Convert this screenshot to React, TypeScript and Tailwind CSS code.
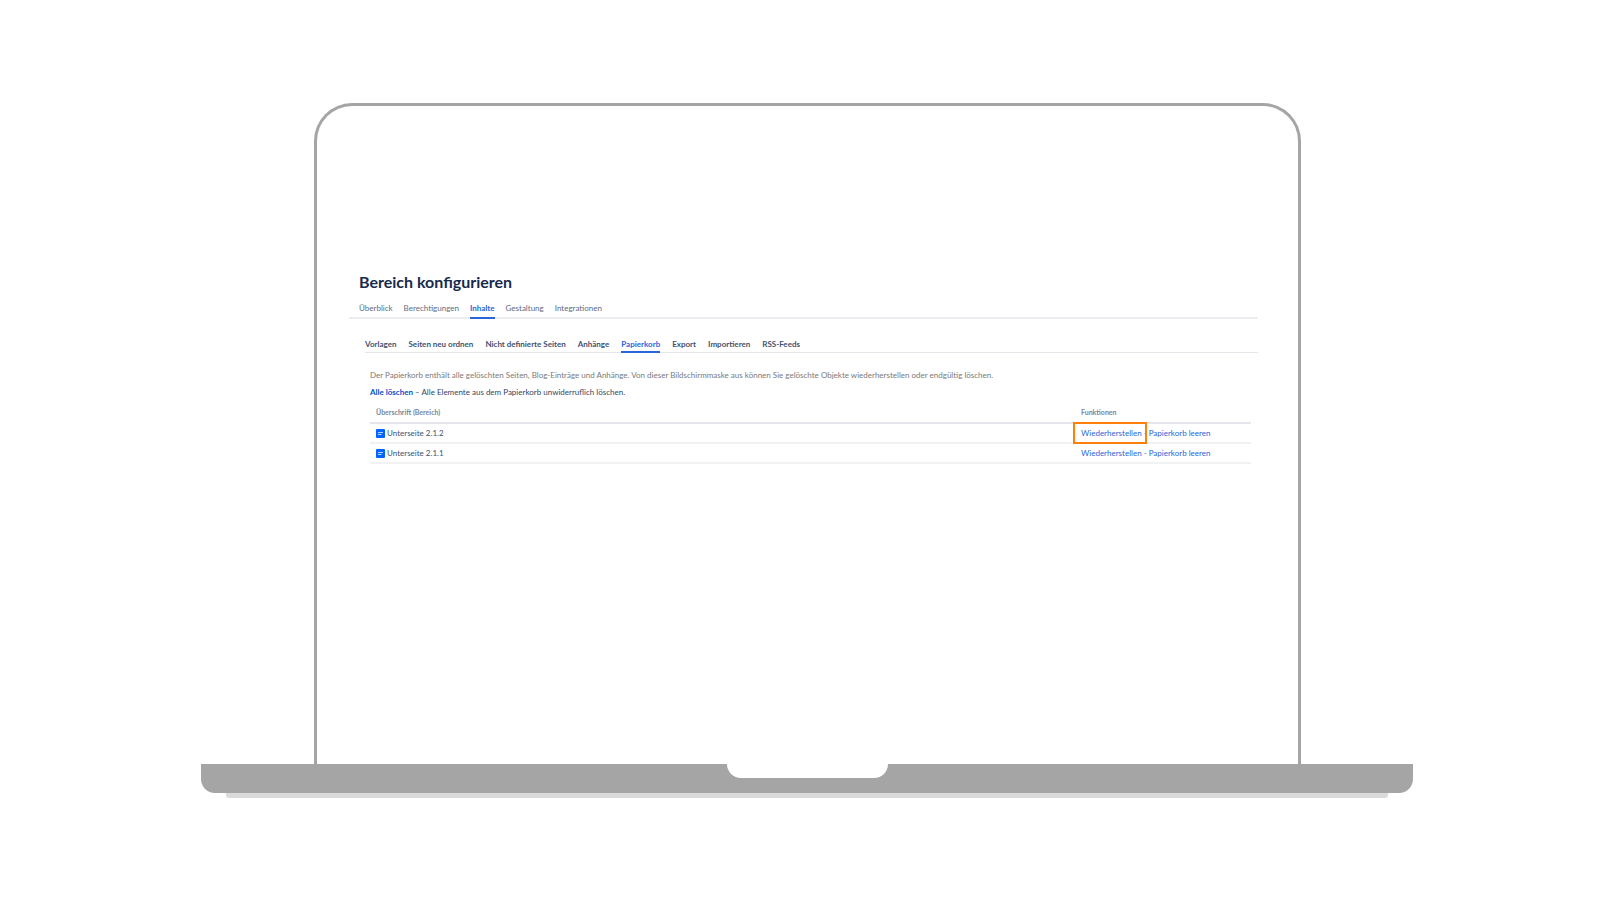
const mainTabs = ['Überblick', 'Berechtigungen', 'Inhalte', 'Gestaltung', 'Integrationen'];
const contentTabs = ['Vorlagen', 'Seiten neu ordnen', 'Nicht definierte Seiten', 'Anhänge', 'Papierkorb', 'Export', 'Importieren', 'RSS-Feeds'];
const deletedPages = ['Unterseite 2.1.2', 'Unterseite 2.1.1'];

function PageIcon() {
    return (
        <svg viewBox="0 0 9 9" className="size-[9px] shrink-0" aria-hidden="true">
            <rect width="9" height="9" rx="1" fill="#0065ff"/>
            <path d="M2 3.5h5M2 5.5h3.5" stroke="#b3d4ff" strokeWidth="1"/>
        </svg>
    );
}

function MainNav() {
    return (
        <nav className="flex gap-[11px] border-b-2 border-[#ebecf0] pl-[10px] text-[8px] leading-[14px] text-[#5e6c84]">
            {mainTabs.map((tab) => (
                <a
                    key={tab}
                    href="#"
                    className={tab === 'Inhalte' ? '-mb-[2px] border-b-2 border-[#2b65d9] pb-[2px] font-bold text-[#2b65d9]' : 'pb-[2px]'}
                >
                    {tab}
                </a>
            ))}
        </nav>
    );
}

function ContentNav() {
    return (
        <nav className="ml-4 mt-[18px] flex gap-3 border-b border-[#e4e6ec] text-[8px] font-bold leading-[14px] text-[#42526e]">
            {contentTabs.map((tab) => (
                <a
                    key={tab}
                    href="#"
                    className={tab === 'Papierkorb' ? '-mb-px border-b-2 border-[#2b65d9] text-[#2b65d9]' : ''}
                >
                    {tab}
                </a>
            ))}
        </nav>
    );
}

function TrashTable() {
    return (
        <table className="mt-[5px] w-full text-left text-[8px] leading-[14px] text-[#42526e]">
            <thead>
                <tr className="border-b-2 border-[#e4e6ec] text-[7px] text-[#7a869a]">
                    <th className="h-[19px] pl-[6px] pb-[2px] font-bold">Überschrift (Bereich)</th>
                    <th className="w-[170px] pb-[2px] font-bold">Funktionen</th>
                </tr>
            </thead>
            <tbody>
                {deletedPages.map((page, index) => (
                    <tr key={page} className="border-b-2 border-[#f1f2f4]">
                        <td className="h-5 pl-[6px]">
                            <span className="flex items-center gap-[2px]">
                                <PageIcon/>
                                {page}
                            </span>
                        </td>
                        <td className="relative text-[#2b65d9]">
                            <a href="#">Wiederherstellen</a> - <a href="#">Papierkorb leeren</a>
                            {index === 0 && (
                                <span className="pointer-events-none absolute -left-2 -top-[2px] h-[22px] w-[74px] border-2 border-[#ff7f0a]"/>
                            )}
                        </td>
                    </tr>
                ))}
            </tbody>
        </table>
    );
}

export default function App() {
    return (
        <main className="min-h-screen bg-white pl-[201px] pr-[187px] pt-[103px] font-['Lato','Noto_Sans',sans-serif]">
            <div className="ml-[113px] mr-[112px] min-h-[661px] rounded-t-[38px] border-[3px] border-b-0 border-[#a5a5a5] pb-12 pl-8 pr-10 pt-[164px]">
                <h1 className="pl-[10px] text-[16px] font-bold leading-6 text-[#172b4d]">Bereich konfigurieren</h1>
                <div className="mt-[7px]">
                    <MainNav/>
                </div>
                <ContentNav/>
                <section className="ml-[21px] mr-[7px] mt-[15px] text-[8px] leading-[14px]">
                    <p className="text-[#7a7a7a]">
                        Der Papierkorb enthält alle gelöschten Seiten, Blog-Einträge und Anhänge. Von dieser Bildschirmmaske aus können Sie gelöschte Objekte wiederherstellen oder endgültig löschen.
                    </p>
                    <p className="mt-[3px] text-[#344563]">
                        <a href="#" className="font-bold text-[#0052cc]">Alle löschen</a> – Alle Elemente aus dem Papierkorb unwiderruflich löschen.
                    </p>
                    <TrashTable/>
                </section>
            </div>
            <div className="flex h-[29px] justify-center rounded-b-[14px] bg-[#a5a5a5]">
                <div className="h-[14px] w-[161px] rounded-b-[14px] bg-white"/>
            </div>
            <div className="mx-[25px] h-[5px] rounded-b-[3px] bg-[#dadada]"/>
        </main>
    );
}
